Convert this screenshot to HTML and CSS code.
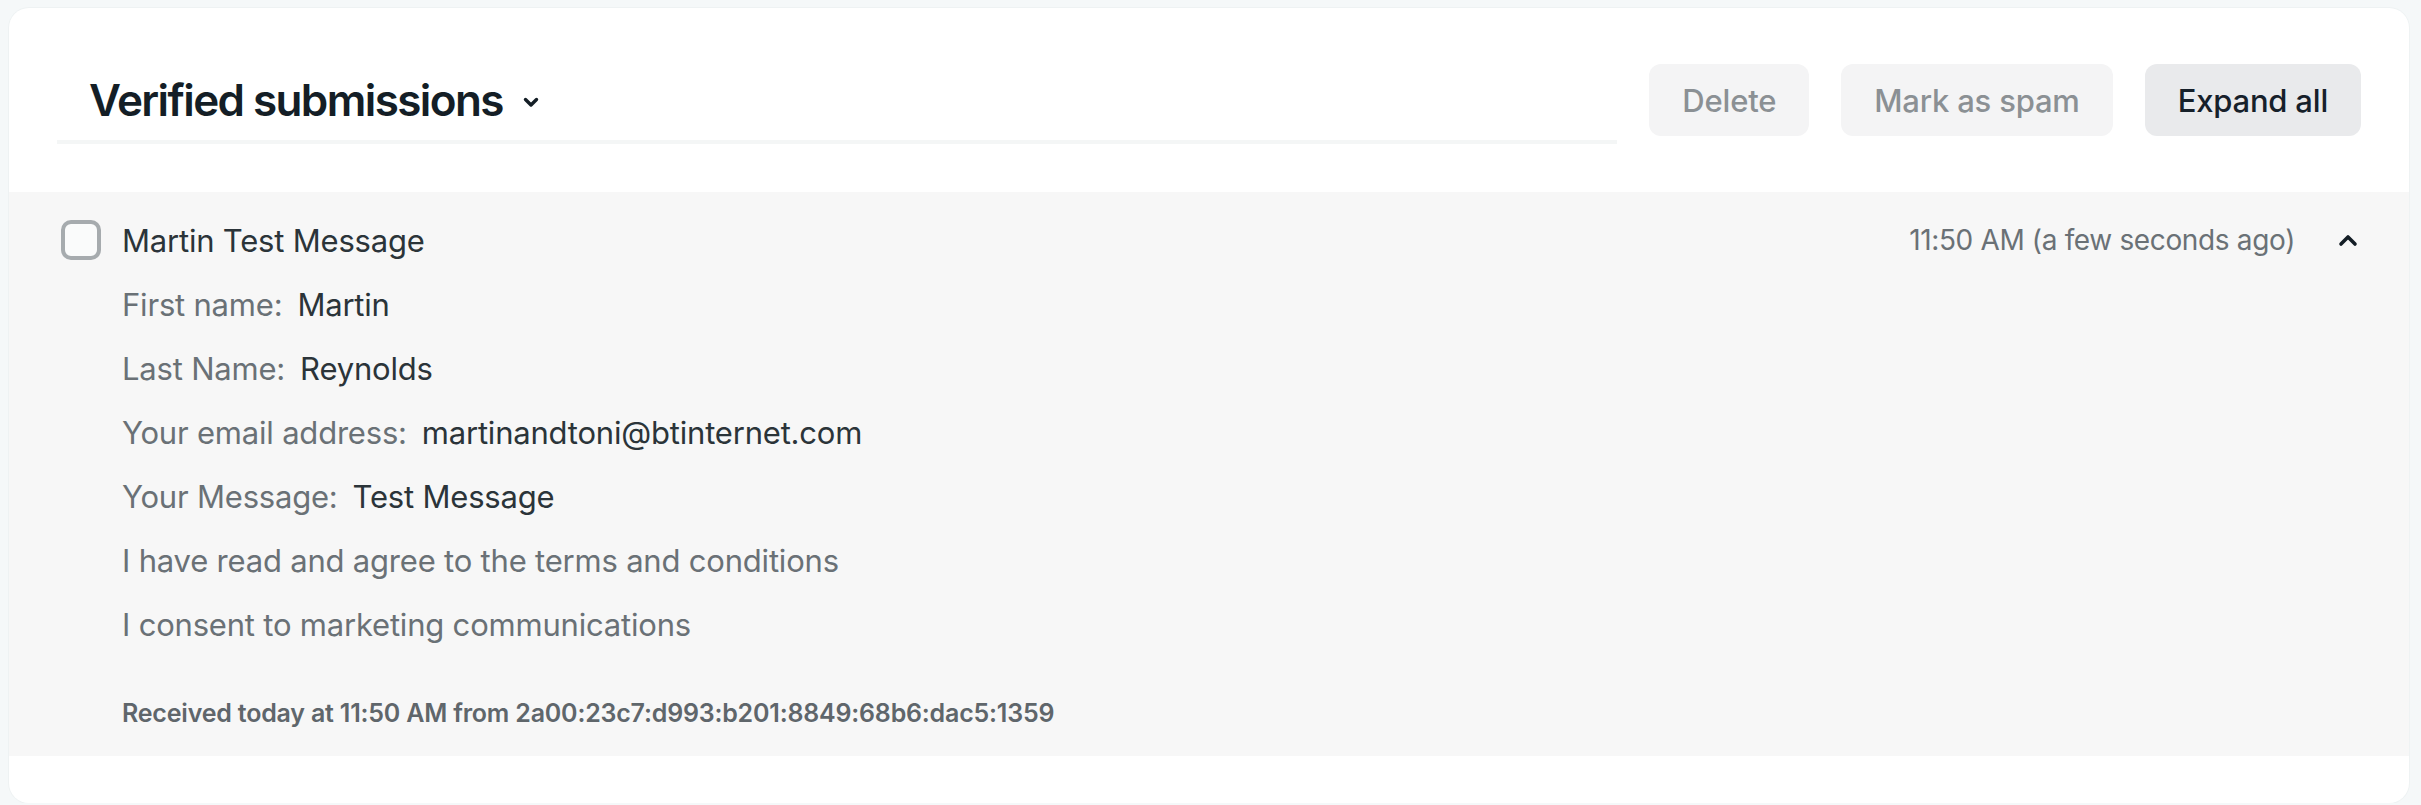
FILE: index.html
```html
<!DOCTYPE html>
<html lang="en">
<head>
<meta charset="utf-8">
<title>Verified submissions</title>
<link rel="stylesheet" href="styles.css">
</head>
<body>
<div class="card">
  <div class="header">
    <div class="title-block">
      <h1 class="title">Verified submissions</h1>
      <svg class="title-chevron" width="16" height="11" viewBox="0 0 16 11"><path d="M2.5 2.5 L8 8 L13.5 2.5" fill="none" stroke="#141e26" stroke-width="3.4" stroke-linecap="round" stroke-linejoin="round"/></svg>
    </div>
    <div class="actions">
      <button class="btn btn-disabled">Delete</button>
      <button class="btn btn-disabled">Mark as spam</button>
      <button class="btn btn-primary">Expand all</button>
    </div>
  </div>
  <div class="submission">
    <div class="sub-head">
      <span class="checkbox"></span>
      <span class="sub-title">Martin Test Message</span>
      <span class="sub-time">11:50 AM (a few seconds ago)</span>
      <svg class="sub-chevron" width="20" height="14" viewBox="0 0 20 14"><path d="M3 11 L10 4 L17 11" fill="none" stroke="#141e26" stroke-width="3.6" stroke-linecap="round" stroke-linejoin="round"/></svg>
    </div>
    <div class="fields">
      <div class="field"><span class="label">First name:</span><span class="value">Martin</span></div>
      <div class="field"><span class="label">Last Name:</span><span class="value">Reynolds</span></div>
      <div class="field"><span class="label">Your email address:</span><span class="value">martinandtoni@btinternet.com</span></div>
      <div class="field"><span class="label">Your Message:</span><span class="value">Test Message</span></div>
      <div class="field"><span class="label">I have read and agree to the terms and conditions</span></div>
      <div class="field"><span class="label">I consent to marketing communications</span></div>
    </div>
    <div class="receipt">Received today at 11:50 AM from 2a00:23c7:d993:b201:8849:68b6:dac5:1359</div>
  </div>
</div>
</body>
</html>
```

FILE: styles.css
```css
* { box-sizing: border-box; }

html, body {
  margin: 0;
  padding: 0;
}

body {
  background: #f5f8f9;
  font-family: Inter, "Noto Sans", "Liberation Sans", sans-serif;
  color: #2b3439;
  padding: 8px 12px 0 9px;
}

.card {
  width: 2400px;
  background: #ffffff;
  border-radius: 20px;
  overflow: hidden;
  padding-bottom: 47px;
  box-shadow: 0 0 0 1px #eef2f3;
}

.header {
  height: 184px;
  display: flex;
  align-items: center;
  padding: 0 48px;
  gap: 32px;
}

.title-block {
  flex: 1;
  height: 88px;
  padding: 4px 32px 0;
  border-bottom: 4px solid #f4f6f6;
  display: flex;
  align-items: center;
}

.title {
  margin: 0;
  font-size: 44px;
  font-weight: 600;
  letter-spacing: -1.6px;
  color: #141e26;
  line-height: 1;
}

.title-chevron {
  margin-left: 20px;
  margin-top: 4px;
}

.actions {
  display: flex;
  gap: 32px;
}

.btn {
  height: 72px;
  padding: 0 33px;
  border: none;
  border-radius: 12px;
  font-family: inherit;
  font-size: 31px;
  font-weight: 500;
  letter-spacing: -0.2px;
}

.btn-disabled {
  background: #f4f4f5;
  color: #8b9094;
}

.btn-primary {
  background: #e9eaec;
  color: #16202a;
}

.submission {
  background: #f7f7f7;
  padding: 16px 51px 23px 52px;
}

.sub-head {
  height: 64px;
  display: flex;
  align-items: center;
}

.checkbox {
  width: 40px;
  height: 40px;
  border: 4px solid #a6abae;
  border-radius: 10px;
  background: #fafbfb;
  margin-right: 21px;
  flex: none;
}

.sub-title {
  flex: 1;
  font-size: 31px;
  color: #2b3439;
  letter-spacing: -0.2px;
}

.sub-time {
  font-size: 28px;
  color: #6a7176;
  letter-spacing: -0.35px;
}

.sub-chevron {
  margin-left: 43px;
}

.fields {
  padding-left: 61px;
}

.field {
  height: 64px;
  display: flex;
  align-items: center;
  gap: 15px;
  font-size: 31px;
  letter-spacing: -0.2px;
}

.label {
  color: #6a7176;
}

.value {
  color: #2b3439;
}

.receipt {
  margin-top: 37px;
  padding-left: 61px;
  font-size: 25px;
  line-height: 40px;
  font-weight: 600;
  letter-spacing: -0.2px;
  color: #5f666b;
}
```
